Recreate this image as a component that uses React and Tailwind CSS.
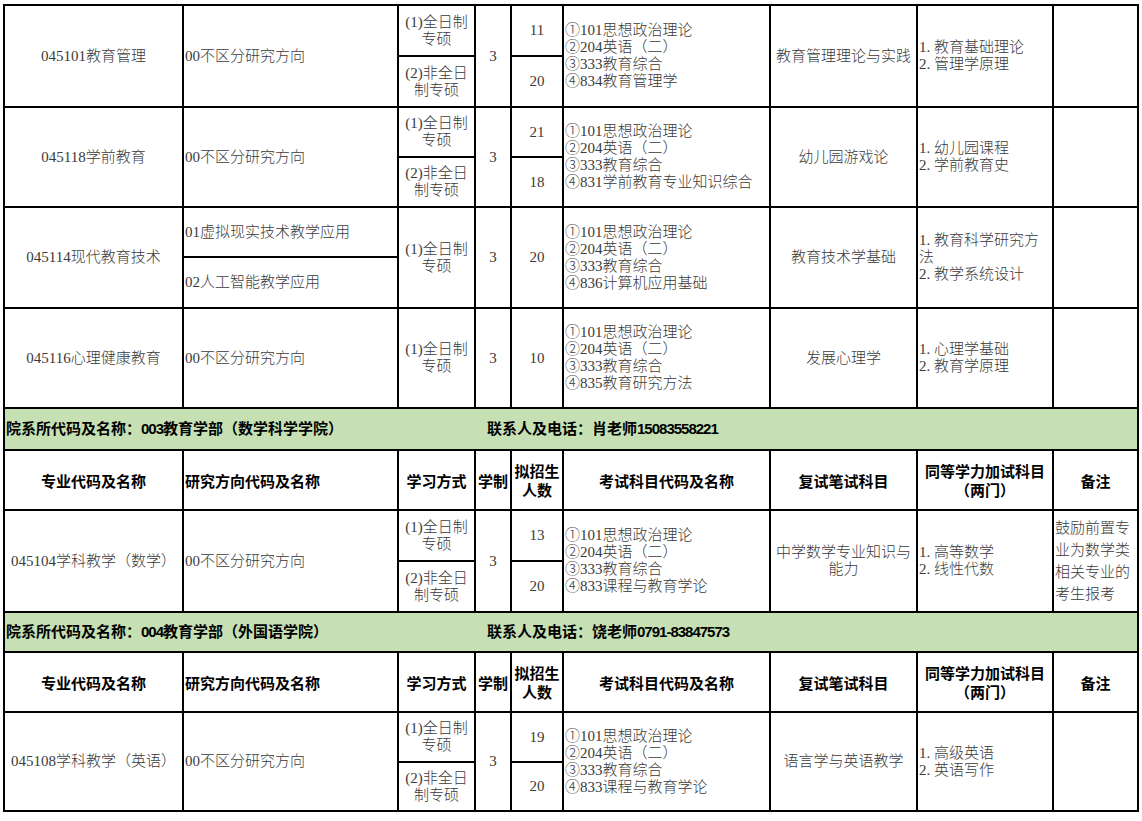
import React from 'react';

const serif = "font-['Liberation_Serif','Noto_Sans_CJK_SC',serif] font-light text-[#3a3a3a]";
const bold = "font-['Noto_Sans_CJK_SC',sans-serif] font-bold text-black";

const programs = [
  {
    code: '045101教育管理',
    dirs: ['00不区分研究方向'],
    modes: [
      { label: ['(1)全日制', '专硕'], count: '11' },
      { label: ['(2)非全日', '制专硕'], count: '20' },
    ],
    exam: ['①101思想政治理论', '②204英语（二）', '③333教育综合', '④834教育管理学'],
    retest: ['教育管理理论与实践'],
    extra: ['1. 教育基础理论', '2. 管理学原理'],
    note: [],
  },
  {
    code: '045118学前教育',
    dirs: ['00不区分研究方向'],
    modes: [
      { label: ['(1)全日制', '专硕'], count: '21' },
      { label: ['(2)非全日', '制专硕'], count: '18' },
    ],
    exam: ['①101思想政治理论', '②204英语（二）', '③333教育综合', '④831学前教育专业知识综合'],
    retest: ['幼儿园游戏论'],
    extra: ['1. 幼儿园课程', '2. 学前教育史'],
    note: [],
  },
  {
    code: '045114现代教育技术',
    dirs: ['01虚拟现实技术教学应用', '02人工智能教学应用'],
    modes: [{ label: ['(1)全日制', '专硕'], count: '20' }],
    exam: ['①101思想政治理论', '②204英语（二）', '③333教育综合', '④836计算机应用基础'],
    retest: ['教育技术学基础'],
    extra: ['1. 教育科学研究方', '法', '2. 教学系统设计'],
    note: [],
  },
  {
    code: '045116心理健康教育',
    dirs: ['00不区分研究方向'],
    modes: [{ label: ['(1)全日制', '专硕'], count: '10' }],
    exam: ['①101思想政治理论', '②204英语（二）', '③333教育综合', '④835教育研究方法'],
    retest: ['发展心理学'],
    extra: ['1. 心理学基础', '2. 教育学原理'],
    note: [],
  },
];

const math = {
  code: '045104学科教学（数学）',
  dirs: ['00不区分研究方向'],
  modes: [
    { label: ['(1)全日制', '专硕'], count: '13' },
    { label: ['(2)非全日', '制专硕'], count: '20' },
  ],
  exam: ['①101思想政治理论', '②204英语（二）', '③333教育综合', '④833课程与教育学论'],
  retest: ['中学数学专业知识与', '能力'],
  extra: ['1. 高等数学', '2. 线性代数'],
  note: ['鼓励前置专', '业为数学类', '相关专业的', '考生报考'],
};

const english = {
  code: '045108学科教学（英语）',
  dirs: ['00不区分研究方向'],
  modes: [
    { label: ['(1)全日制', '专硕'], count: '19' },
    { label: ['(2)非全日', '制专硕'], count: '20' },
  ],
  exam: ['①101思想政治理论', '②204英语（二）', '③333教育综合', '④833课程与教育学论'],
  retest: ['语言学与英语教学'],
  extra: ['1. 高级英语', '2. 英语写作'],
  note: [],
};

const Lines = ({ lines }) =>
  lines.map((l, i) => (
    <React.Fragment key={i}>
      {i > 0 && <br />}
      {l}
    </React.Fragment>
  ));

const Cell = ({ className = '', children }) => (
  <div className={`bg-white flex items-center text-[15px] leading-[17px] ${className}`}>{children}</div>
);

const Program = ({ p }) => {
  const two = p.modes.length === 2;
  const splitDirs = p.dirs.length === 2;
  return (
    <>
      <Cell className={`row-span-2 justify-center text-center ${serif}`}>{p.code}</Cell>
      <Cell className={`${splitDirs ? '' : 'row-span-2'} pl-[1px] ${serif}`}>{p.dirs[0]}</Cell>
      <Cell className={`${two ? '' : 'row-span-2'} justify-center text-center ${serif}`}>
        <div><Lines lines={p.modes[0].label} /></div>
      </Cell>
      <Cell className={`row-span-2 justify-center ${serif}`}>3</Cell>
      <Cell className={`${two ? '' : 'row-span-2'} justify-center ${serif}`}>{p.modes[0].count}</Cell>
      <Cell className={`row-span-2 pl-[1px] ${serif}`}>
        <div><Lines lines={p.exam} /></div>
      </Cell>
      <Cell className={`row-span-2 justify-center text-center ${serif}`}>
        <div><Lines lines={p.retest} /></div>
      </Cell>
      <Cell className={`row-span-2 pl-[1px] ${serif}`}>
        <div><Lines lines={p.extra} /></div>
      </Cell>
      <Cell className={`row-span-2 pl-[1px] ${serif} leading-[22px]`}>
        <div><Lines lines={p.note} /></div>
      </Cell>
      {splitDirs && <Cell className={`pl-[1px] ${serif}`}>{p.dirs[1]}</Cell>}
      {two && (
        <Cell className={`justify-center text-center ${serif}`}>
          <div><Lines lines={p.modes[1].label} /></div>
        </Cell>
      )}
      {two && <Cell className={`justify-center ${serif}`}>{p.modes[1].count}</Cell>}
    </>
  );
};

// digits in the green bands are narrow, like SimHei's half-width figures
const Num = ({ children }) => (
  <span className="font-['Liberation_Sans',sans-serif] tracking-[-1px]">{children}</span>
);

const Section = ({ code, dept, teacher, phone }) => (
  <div className={`col-span-9 bg-[#c6e0b4] flex items-center text-[15px] pl-[1px] ${bold}`}>
    <span className="w-[481px] shrink-0">
      院系所代码及名称：<Num>{code}</Num>{dept}
    </span>
    <span>
      联系人及电话：{teacher}<Num>{phone}</Num>
    </span>
  </div>
);

const HeaderRow = () => (
  <>
    <Cell className={`justify-center ${bold}`}>专业代码及名称</Cell>
    <Cell className={`pl-[1px] ${bold}`}>研究方向代码及名称</Cell>
    <Cell className={`justify-center ${bold}`}>学习方式</Cell>
    <Cell className={`justify-center ${bold}`}>学制</Cell>
    <Cell className={`justify-center text-center leading-[19px] ${bold}`}>
      <div>拟招生<br />人数</div>
    </Cell>
    <Cell className={`justify-center ${bold}`}>考试科目代码及名称</Cell>
    <Cell className={`justify-center ${bold}`}>复试笔试科目</Cell>
    <Cell className={`justify-center text-center leading-[19px] ${bold}`}>
      <div>同等学力加试科目<br />（两门）</div>
    </Cell>
    <Cell className={`justify-center ${bold}`}>备注</Cell>
  </>
);

export default function App() {
  return (
    <div className="min-h-screen bg-white pt-[4px] pl-[3px]">
      <div className="grid w-fit bg-black p-[2px] gap-[2px] grid-cols-[177px_213px_75px_34px_50px_205px_145px_134px_83px] grid-rows-[49px_49px_48px_48px_48px_49px_48px_48px_40px_58px_49px_49px_38px_58px_48px_47px]">
        {programs.map((p) => (
          <Program key={p.code} p={p} />
        ))}
        <Section code="003" dept="教育学部（数学科学学院）" teacher="肖老师" phone="15083558221" />
        <HeaderRow />
        <Program p={math} />
        <Section code="004" dept="教育学部（外国语学院）" teacher="饶老师" phone="0791-83847573" />
        <HeaderRow />
        <Program p={english} />
      </div>
    </div>
  );
}
